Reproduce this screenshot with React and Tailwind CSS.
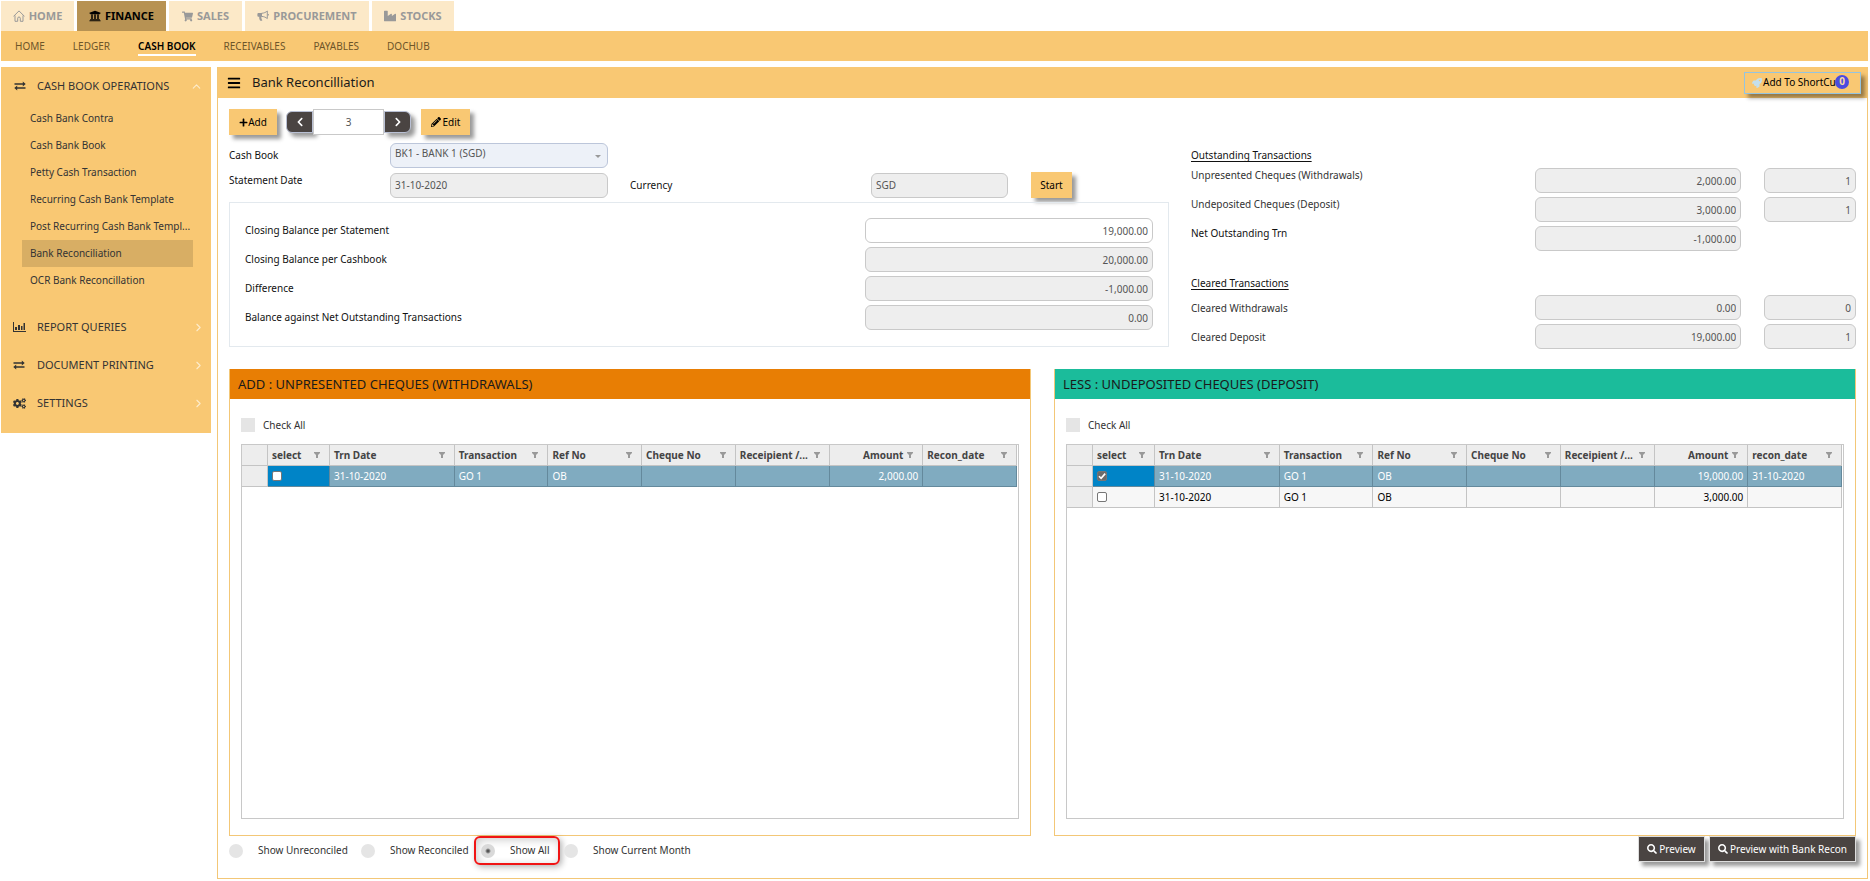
import React from "react";
import {
  FaUniversity,
  FaShoppingCart,
  FaIndustry,
  FaPlus,
  FaBars,
  FaPencilAlt,
  FaSearch,
  FaCogs,
  FaRocket,
  FaChevronLeft,
  FaChevronRight,
} from "react-icons/fa";
import { ChevronRight, ChevronUp } from "lucide-react";

function HomeIcon() {
  return (
    <svg viewBox="0 0 12 12" className="size-3" fill="none" stroke="currentColor" strokeWidth="1" aria-hidden="true">
      <path d="M0.5 6.4 6 0.9l5.500 5.500M2 5.500V11.300h2.700V8.200c0-.8.500-1.200 1.300-1.200s1.300.4 1.300 1.200v3.100H10V5.500" />
    </svg>
  );
}

function HornIcon() {
  return (
    <svg viewBox="0 0 12 12" className="size-3" fill="none" stroke="currentColor" aria-hidden="true">
      <path d="M4.500 3.300C7 3.200 8.800 2.300 10.300 1v7.600C8.800 7.300 7 6.500 4.500 6.400" strokeWidth="1" />
      <path d="M1.300 3h3.700v3.700H4.400c-.2 1.600.2 2.600 1 3.600-.8.8-1.900.6-2.500 0-.4-1-.9-2.200-.6-3.600H1.300C.8 6.700.4 6.300.4 5.800V3.900C.4 3.400.8 3 1.300 3Z" fill="currentColor" stroke="none" />
      <path d="M11.200 3.900v1.600" strokeWidth="1.200" />
    </svg>
  );
}

function ExchangeIcon() {
  return (
    <svg viewBox="0 0 12 12" className="size-3" fill="currentColor" aria-hidden="true">
      <path d="M0.500 3.300h8.300V1.500L11.700 4 8.800 6.400V4.700H0.500ZM11.500 7.300H3.200V5.600L.3 8l2.900 2.500V8.700h8.300Z" />
    </svg>
  );
}

function ChartIcon() {
  return (
    <svg viewBox="0 0 13 12" className="h-3 w-[13px]" fill="currentColor" aria-hidden="true">
      <path d="M0 1h1v9h12v1H0ZM2 6h2v3H2ZM5 4h2v5H5ZM8 5h1.500v4H8ZM10.500 2h1.500v7H10.500Z" />
    </svg>
  );
}

const modules = [
  { name: "HOME", icon: <HomeIcon />, width: "w-[73px]" },
  { name: "FINANCE", icon: <FaUniversity className="size-3" />, active: true, width: "w-[89px]" },
  { name: "SALES", icon: <FaShoppingCart className="size-[11px]" />, width: "w-[73px]" },
  { name: "PROCUREMENT", icon: <HornIcon />, width: "w-[124px]" },
  { name: "STOCKS", icon: <FaIndustry className="size-3" />, width: "w-[82px]" },
];

const sections = ["HOME", "LEDGER", "CASH BOOK", "RECEIVABLES", "PAYABLES", "DOCHUB"];

const operations = [
  "Cash Bank Contra",
  "Cash Bank Book",
  "Petty Cash Transaction",
  "Recurring Cash Bank Template",
  "Post Recurring Cash Bank Templ...",
  "Bank Reconciliation",
  "OCR Bank Reconcillation",
];

const groups = [
  { name: "REPORT QUERIES", icon: <ChartIcon /> },
  { name: "DOCUMENT PRINTING", icon: <ExchangeIcon /> },
  { name: "SETTINGS", icon: <FaCogs className="size-[13px]" /> },
];

const shadow = "shadow-[4px_4px_4px_rgba(0,0,0,0.4)]";

function Sidebar() {
  return (
    <nav className="w-[210px] shrink-0 bg-[#f9c873] pb-[11px] text-[#333]">
      <button type="button" className="flex h-[38px] w-full items-center pl-[13px] pr-2 text-[11px]">
        <ExchangeIcon />
        <span className="ml-[11px] flex-1 text-left">CASH BOOK OPERATIONS</span>
        <ChevronUp className="size-[13px] text-[#fdeccb]" strokeWidth={2} />
      </button>
      <ul className="ml-[21px] mr-[18px]">
        {operations.map((o) => (
          <li key={o}>
            <a
              href="#"
              className={
                "block h-[27px] whitespace-nowrap pl-2 text-[10px] leading-[26px] " +
                (o === "Bank Reconciliation" ? "bg-[#d8ae64]" : "")
              }
            >
              {o}
            </a>
          </li>
        ))}
      </ul>
      <div className="mt-3.5">
        {groups.map((g) => (
          <button key={g.name} type="button" className="flex h-[38px] w-full items-center pl-3 pr-1.5 text-[11px]">
            <span className="flex w-6 justify-start">{g.icon}</span>
            <span className="flex-1 text-left">{g.name}</span>
            <ChevronRight className="size-[13px] text-[#fdeccb]" strokeWidth={2} />
          </button>
        ))}
      </div>
    </nav>
  );
}

const fieldBase = "h-[25px] w-full min-w-0 rounded-[6px] border border-[#c9c9c9] px-1 text-[10px] text-[#555] outline-none ";

function Field({ id, value, label, white, right = true }) {
  return (
    <input
      id={id}
      aria-label={label}
      defaultValue={value}
      readOnly={!white}
      className={fieldBase + (white ? "bg-white " : "bg-[#eee] ") + (right ? "text-right" : "")}
    />
  );
}

const balances = [
  ["Closing Balance per Statement", "19,000.00"],
  ["Closing Balance per Cashbook", "20,000.00"],
  ["Difference", "-1,000.00"],
  ["Balance against Net Outstanding Transactions", "0.00"],
];

function SummaryRow({ label, amount, count, id, top, strong }) {
  return (
    <div className="grid grid-cols-[322fr_207fr_92fr] gap-x-[23px]">
      <label
        htmlFor={id}
        className={
          "leading-[14px] " + (top ? "self-start " : "self-center ") + (strong ? "text-[#111]" : "text-[#333]")
        }
      >
        {label}
      </label>
      <Field id={id} value={amount} />
      {count !== undefined && <Field value={count} label={label + " count"} />}
    </div>
  );
}

const columns = [
  ["select", "w-[8%]"],
  ["Trn Date", "w-[16.1%]"],
  ["Transaction", "w-[12.1%]"],
  ["Ref No", "w-[12.1%]"],
  ["Cheque No", "w-[12.1%]"],
  ["Receipient /...", "w-[12.1%]"],
  ["Amount", "w-[12.1%]"],
];

function Grid({ last, rows }) {
  const heads = [...columns, [last, "w-[12.1%]"]];
  return (
    <div className="flex-1 border border-[#c8c8c8] pr-px">
      <table className="w-full table-fixed border-separate border-spacing-0 text-[10px]">
        <thead>
          <tr className="h-[21px] bg-[#ededed] text-[#444]">
            <th className="w-[26px] border-b border-r border-[#c4c4c4]" aria-label="row" />
            {heads.map(([h, w]) => (
              <th key={h} className={"border-b border-r border-[#c4c4c4] p-0 font-bold " + w}>
                <div className="flex h-5 items-center pl-1 pr-[9px]">
                  <span className={"flex-1 whitespace-nowrap " + (h === "Amount" ? "pr-1 text-right" : "text-left")}>{h}</span>
                  <svg viewBox="0 0 6 6" className="size-1.5 shrink-0 text-[#999]" fill="currentColor" aria-hidden="true">
                    <path d="M0 0h6v1L4 3v3H2V3L0 1Z" />
                  </svg>
                </div>
              </th>
            ))}
          </tr>
        </thead>
        <tbody>
          {rows.map((r, i) => {
            const sel = i === 0;
            const line = sel ? "border-[#64899c]" : "border-[#c4c4c4]";
            const cells = ["31-10-2020", r.trn, "OB", "", "", r.amount, r.date];
            return (
              <tr key={i} className={"h-[21px] " + (sel ? "bg-[#80abc0] text-white" : "bg-[#f7f7f7] text-black")}>
                <td className="border-b border-r border-[#c4c4c4] bg-[#ededed]" />
                <td className={"border-b border-r p-0 pl-1 " + line + (sel ? " bg-[#0084c7]" : "")}>
                  <span className="relative flex size-2.5">
                    <input
                      type="checkbox"
                      aria-label={"Select row " + (i + 1)}
                      defaultChecked={r.checked}
                      className="peer size-2.5 appearance-none rounded-[2px] border border-[#767676] bg-white checked:bg-[#6b6b6b]"
                    />
                    <svg
                      viewBox="0 0 10 10"
                      className="pointer-events-none absolute inset-0 hidden size-2.5 peer-checked:block"
                      fill="none"
                      stroke="#fff"
                      strokeWidth="1.6"
                      aria-hidden="true"
                    >
                      <path d="M2 5.200 4.100 7.300 8.200 2.600" />
                    </svg>
                  </span>
                </td>
                {cells.map((c, j) => (
                  <td
                    key={j}
                    className={"truncate border-b border-r p-0 px-1 leading-5 " + line + (j === 5 ? " text-right" : "")}
                  >
                    {c}
                  </td>
                ))}
              </tr>
            );
          })}
        </tbody>
      </table>
    </div>
  );
}

function Panel({ title, tone, id, children }) {
  return (
    <section className="flex flex-col border border-t-0 border-[#f3c777]">
      <h2 className={"h-[30px] pl-2 text-[13px] leading-[30px] text-[#1a1a1a] " + tone}>{title}</h2>
      <div className="flex flex-1 flex-col px-[11px] pb-4 pt-[19px]">
        <div className="mb-3 flex h-3.5 items-center gap-2">
          <input id={id} type="checkbox" className="size-3.5 appearance-none bg-[#e5e5e5] checked:bg-[#999]" />
          <label htmlFor={id} className="text-[#333]">Check All</label>
        </div>
        {children}
      </div>
    </section>
  );
}

function Radio({ id, label, checked }) {
  return (
    <div className="flex items-center gap-[15px]">
      <input
        id={id}
        type="radio"
        name="filter"
        defaultChecked={checked}
        className="size-3.5 appearance-none rounded-full bg-[#e5e5e5] checked:bg-[radial-gradient(circle,#555_1px,#d9d9d9_3px)]"
      />
      <label htmlFor={id} className="whitespace-nowrap text-[#333]">{label}</label>
    </div>
  );
}

export default function App() {
  return (
    <div className="flex min-h-screen flex-col bg-white pb-0.5 pl-px pr-0.5 pt-px font-['Noto_Sans',sans-serif] text-[10px]">
      <header>
        <div className="flex gap-[3px]">
          {modules.map((m) => (
            <a
              key={m.name}
              href="#"
              className={
                "flex h-[30px] items-center justify-center gap-1 text-[11px] font-bold " +
                m.width +
                (m.active ? " bg-[#b79253] text-black" : " bg-[#fce9c8] text-[#999]")
              }
            >
              {m.icon}
              {m.name}
            </a>
          ))}
        </div>
        <nav className="flex h-[30px] items-center gap-7 bg-[#f9c873] pl-3.5 pt-px text-[10px] text-[#6d5529]">
          {sections.map((s) => (
            <a
              key={s}
              href="#"
              className={"border-b-2 leading-4 " + (s === "CASH BOOK" ? "border-white font-semibold text-black" : "border-transparent")}
            >
              {s}
            </a>
          ))}
        </nav>
      </header>

      <div className="mt-1.5 flex flex-1 items-start gap-1.5">
        <Sidebar />
        <main className="flex min-w-0 flex-1 flex-col self-stretch border border-[#f3c777]">
          <div className="-mt-px flex h-[31px] items-center bg-[#f9c873] pl-[9px] pr-1.5">
            <button type="button" aria-label="Menu">
              <FaBars className="size-[14px]" />
            </button>
            <h1 className="ml-[11px] flex-1 text-[13px] text-[#1a1a1a]">Bank Reconcilliation</h1>
            <button
              type="button"
              className={"relative flex h-[22px] w-[117px] items-center border border-[#94c4e0] bg-[#f9c873] pl-[7px] text-[10px] text-black " + shadow}
            >
              <FaRocket className="mr-px size-2.5 shrink-0 text-[#c4dfec]" />
              <span className="whitespace-nowrap">Add To ShortCut</span>
              <span className="absolute right-[11px] top-0.5 flex size-3.5 items-center justify-center rounded-full bg-[#4a4ae0] text-[10px] font-bold text-[#f9d9a0]">
                0
              </span>
            </button>
          </div>

          <div className="flex flex-1 flex-col px-[11px] pb-[13px] pt-[11px]">
            <div className="flex h-[26px] items-center">
              <button type="button" className={"flex h-[26px] w-12 items-center justify-center bg-[#f9c873] text-black " + shadow}>
                <FaPlus className="size-[9px]" />
                Add
              </button>
              <div className="ml-[9px] flex items-center">
                <button
                  type="button"
                  aria-label="Previous"
                  className={"flex h-[22px] w-[27px] items-center justify-center rounded-l-[6px] border border-[#b9c0d4] bg-[#4a4442] text-white " + shadow}
                >
                  <FaChevronLeft className="size-2.5" />
                </button>
                <input
                  aria-label="Record number"
                  defaultValue="3"
                  className="relative h-[26px] w-[71px] border border-[#c9c9c9] bg-white text-center text-[#555] outline-none"
                />
                <button
                  type="button"
                  aria-label="Next"
                  className={"flex h-[22px] w-[27px] items-center justify-center rounded-r-[6px] border border-[#b9c0d4] bg-[#4a4442] text-white " + shadow}
                >
                  <FaChevronRight className="size-2.5" />
                </button>
              </div>
              <button type="button" className={"ml-2.5 flex h-[26px] w-[49px] items-center justify-center gap-0.5 bg-[#f9c873] text-black " + shadow}>
                <FaPencilAlt className="size-2.5" />
                Edit
              </button>
            </div>

            <div className="mt-2 grid grid-cols-[940fr_665fr] gap-[22px]">
              <div className="flex flex-col gap-1 text-[#111]">
                <div className="grid grid-cols-[161fr_218fr_561fr] items-center">
                  <label htmlFor="book">Cash Book</label>
                  <div className="relative">
                    <select
                      id="book"
                      className="block h-[25px] w-full appearance-none rounded-[6px] border border-[#bcc6da] bg-[#edf1f8] px-1 pb-1 text-[10px] text-[#555] outline-none"
                    >
                      <option>BK1 - BANK 1 (SGD)</option>
                    </select>
                    <span className="pointer-events-none absolute right-[7px] top-3 border-x-[3px] border-t-[3px] border-x-transparent border-t-[#999]" />
                  </div>
                </div>
                <div className="grid h-[26px] grid-cols-[161fr_218fr_22fr_241fr_137fr_23fr_41fr_97fr] items-center">
                  <label htmlFor="date" className="self-start leading-4">Statement Date</label>
                  <Field id="date" value="31-10-2020" right={false} />
                  <span />
                  <label htmlFor="currency">Currency</label>
                  <Field id="currency" value="SGD" right={false} />
                  <span />
                  <button type="button" className={"h-[26px] bg-[#f9c873] text-black " + shadow}>Start</button>
                </div>
                <div className="flex flex-col gap-1 border border-[#e3e9ee] pb-4 pl-[15px] pr-[15px] pt-[15px]">
                  {balances.map(([l, v], i) => (
                    <div key={l} className="grid grid-cols-[620fr_288fr] items-center">
                      <label htmlFor={"bal" + i}>{l}</label>
                      <Field id={"bal" + i} value={v} white={i === 0} />
                    </div>
                  ))}
                </div>
              </div>

              <div className="flex flex-col gap-1">
                <h3 className="-mb-1 leading-[25px] text-[#111] underline underline-offset-2">Outstanding Transactions</h3>
                <SummaryRow id="o1" top label="Unpresented Cheques (Withdrawals)" amount="2,000.00" count="1" />
                <SummaryRow id="o2" top label="Undeposited Cheques (Deposit)" amount="3,000.00" count="1" />
                <SummaryRow id="o3" top strong label="Net Outstanding Trn" amount="-1,000.00" />
                <h3 className="-mb-1 mt-4 leading-6 text-[#111] underline underline-offset-2">Cleared Transactions</h3>
                <SummaryRow id="c1" label="Cleared Withdrawals" amount="0.00" count="0" />
                <SummaryRow id="c2" label="Cleared Deposit" amount="19,000.00" count="1" />
              </div>
            </div>

            <div className="mt-5 grid flex-1 grid-cols-2 gap-[23px]">
              <Panel id="all-w" title="ADD : UNPRESENTED CHEQUES (WITHDRAWALS)" tone="bg-[#e87e04]">
                <Grid last="Recon_date" rows={[{ trn: "GO 1", amount: "2,000.00", date: "" }]} />
              </Panel>
              <Panel id="all-d" title="LESS : UNDEPOSITED CHEQUES (DEPOSIT)" tone="bg-[#1bbc9b]">
                <Grid
                  last="recon_date"
                  rows={[
                    { trn: "GO 1", amount: "19,000.00", date: "31-10-2020", checked: true },
                    { trn: "GO 1", amount: "3,000.00", date: "" },
                  ]}
                />
              </Panel>
            </div>

            <div className="flex items-start justify-between">
              <div className="flex h-[29px] items-center">
                <div className="w-[132px]"><Radio id="r1" label="Show Unreconciled" /></div>
                <div className="w-[113px]"><Radio id="r2" label="Show Reconciled" /></div>
                <div className="flex h-[29px] w-[86px] items-center rounded-[6px] border-2 border-[#f01414] pl-[5px] shadow-[2px_2px_6px_rgba(0,0,0,0.3),inset_2px_2px_8px_rgba(0,0,0,0.2)]">
                  <Radio id="r3" label="Show All" checked />
                </div>
                <div className="ml-1"><Radio id="r4" label="Show Current Month" /></div>
              </div>
              <div className="flex gap-1 text-white">
                <button type="button" className={"flex h-[26px] w-[67px] items-center justify-center gap-0.5 border border-[#ddd] bg-[#4a4442] " + shadow}>
                  <FaSearch className="size-2.5" />
                  Preview
                </button>
                <button type="button" className={"flex h-[26px] w-[147px] items-center justify-center gap-0.5 border border-[#ddd] bg-[#4a4442] " + shadow}>
                  <FaSearch className="size-2.5" />
                  Preview with Bank Recon
                </button>
              </div>
            </div>
          </div>
        </main>
      </div>
    </div>
  );
}
